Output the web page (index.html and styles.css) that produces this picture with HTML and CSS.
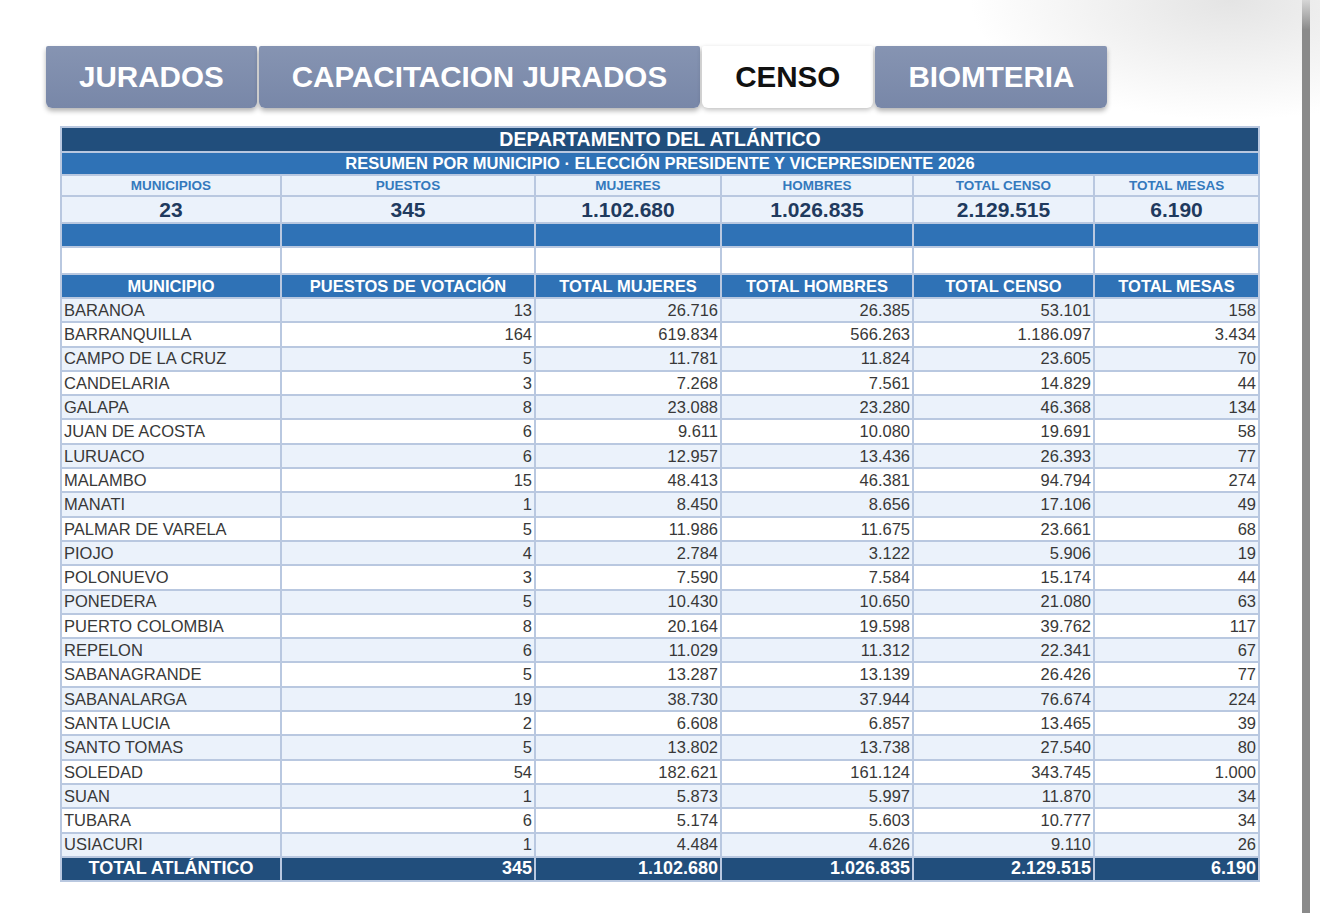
FILE: index.html
```html
<!DOCTYPE html>
<html lang="es">
<head>
    <meta charset="UTF-8">
    <meta name="viewport" content="width=device-width, initial-scale=1.0">
    <title>Censo - Atlántico</title>
    <link rel="stylesheet" href="styles.css">
</head>
<body>
    <div class="page">
        <!-- Tabs -->
        <nav class="tabs">
            <a class="tabs__item">JURADOS</a>
            <a class="tabs__item">CAPACITACION JURADOS</a>
            <a class="tabs__item tabs__item--active">CENSO</a>
            <a class="tabs__item">BIOMTERIA</a>
        </nav>

        <!-- Census table -->
        <table class="censo">
            <colgroup>
                <col style="width:220px">
                <col style="width:254px">
                <col style="width:186px">
                <col style="width:192px">
                <col style="width:181px">
                <col style="width:165px">
            </colgroup>
            <tr class="censo__title"><td colspan="6">DEPARTAMENTO DEL ATLÁNTICO</td></tr>
            <tr class="censo__subtitle"><td colspan="6">RESUMEN POR MUNICIPIO · ELECCIÓN PRESIDENTE Y VICEPRESIDENTE 2026</td></tr>
            <tr class="censo__labels">
                <td>MUNICIPIOS</td><td>PUESTOS</td><td>MUJERES</td><td>HOMBRES</td><td>TOTAL CENSO</td><td>TOTAL MESAS</td>
            </tr>
            <tr class="censo__values">
                <td>23</td><td>345</td><td>1.102.680</td><td>1.026.835</td><td>2.129.515</td><td>6.190</td>
            </tr>
            <tr class="censo__band"><td></td><td></td><td></td><td></td><td></td><td></td></tr>
            <tr class="censo__blank"><td></td><td></td><td></td><td></td><td></td><td></td></tr>
            <tr class="censo__head">
                <td>MUNICIPIO</td><td>PUESTOS DE VOTACIÓN</td><td>TOTAL MUJERES</td><td>TOTAL HOMBRES</td><td>TOTAL CENSO</td><td>TOTAL MESAS</td>
            </tr>
            <tbody id="rows"></tbody>
            <tr class="censo__total">
                <td>TOTAL ATLÁNTICO</td><td>345</td><td>1.102.680</td><td>1.026.835</td><td>2.129.515</td><td>6.190</td>
            </tr>
        </table>
    </div>
    <div class="edge"></div>

    <script>
        const data = [
            ['BARANOA', '13', '26.716', '26.385', '53.101', '158'],
            ['BARRANQUILLA', '164', '619.834', '566.263', '1.186.097', '3.434'],
            ['CAMPO DE LA CRUZ', '5', '11.781', '11.824', '23.605', '70'],
            ['CANDELARIA', '3', '7.268', '7.561', '14.829', '44'],
            ['GALAPA', '8', '23.088', '23.280', '46.368', '134'],
            ['JUAN DE ACOSTA', '6', '9.611', '10.080', '19.691', '58'],
            ['LURUACO', '6', '12.957', '13.436', '26.393', '77'],
            ['MALAMBO', '15', '48.413', '46.381', '94.794', '274'],
            ['MANATI', '1', '8.450', '8.656', '17.106', '49'],
            ['PALMAR DE VARELA', '5', '11.986', '11.675', '23.661', '68'],
            ['PIOJO', '4', '2.784', '3.122', '5.906', '19'],
            ['POLONUEVO', '3', '7.590', '7.584', '15.174', '44'],
            ['PONEDERA', '5', '10.430', '10.650', '21.080', '63'],
            ['PUERTO COLOMBIA', '8', '20.164', '19.598', '39.762', '117'],
            ['REPELON', '6', '11.029', '11.312', '22.341', '67'],
            ['SABANAGRANDE', '5', '13.287', '13.139', '26.426', '77'],
            ['SABANALARGA', '19', '38.730', '37.944', '76.674', '224'],
            ['SANTA LUCIA', '2', '6.608', '6.857', '13.465', '39'],
            ['SANTO TOMAS', '5', '13.802', '13.738', '27.540', '80'],
            ['SOLEDAD', '54', '182.621', '161.124', '343.745', '1.000'],
            ['SUAN', '1', '5.873', '5.997', '11.870', '34'],
            ['TUBARA', '6', '5.174', '5.603', '10.777', '34'],
            ['USIACURI', '1', '4.484', '4.626', '9.110', '26']
        ];

        const rows = document.getElementById('rows');
        data.forEach(row => {
            const tr = document.createElement('tr');
            tr.className = 'censo__row';
            tr.innerHTML = row.map(cell => `<td>${cell}</td>`).join('');
            rows.appendChild(tr);
        });
    </script>
</body>
</html>
```

FILE: styles.css
```css
html, body {
    height: 100%;
}

body {
    margin: 0;
    display: flex;
    font-family: 'Liberation Sans', Arial, sans-serif;
    background:
        radial-gradient(ellipse 260px 120px at 1230px 0, #e4e4e4, rgba(255, 255, 255, 0)),
        #ffffff;
}

.page {
    width: 1302px;
    padding: 46px 0 0 46px;
    box-sizing: border-box;
}

/* Right edge bar */
.edge {
    width: 8px;
    height: 100%;
    background: linear-gradient(#d6d6d6, #8a8a8a 30px, #8a8a8a);
}

/* Tabs */
.tabs {
    display: flex;
    gap: 2px;
}

.tabs__item {
    height: 62px;
    padding: 0 33px;
    display: flex;
    align-items: center;
    font-size: 29.6px;
    font-weight: 700;
    color: #ffffff;
    background: linear-gradient(#8694b2, #7887a8);
    border-radius: 2px 2px 6px 6px;
    box-shadow: 0 3px 5px rgba(0, 0, 0, 0.3);
}

.tabs__item--active {
    color: #111111;
    background: #ffffff;
    box-shadow: 0 2px 5px rgba(0, 0, 0, 0.25);
}

/* Census table */
.censo {
    margin: 18px 0 0 14px;
    border-collapse: collapse;
    table-layout: fixed;
    width: 1198px;
}

.censo td {
    border: 2px solid #b9c8e0;
    padding: 0 2px;
    white-space: nowrap;
    overflow: hidden;
}

.censo__title td {
    height: 22px;
    background: #214e7c;
    color: #ffffff;
    font-size: 19.5px;
    font-weight: 700;
    text-align: center;
}

.censo__subtitle td {
    height: 21px;
    background: #2f72b6;
    color: #ffffff;
    font-size: 16.5px;
    font-weight: 700;
    text-align: center;
}

.censo__labels td {
    height: 19px;
    background: #ebf2fb;
    color: #3479bd;
    font-size: 13.5px;
    font-weight: 700;
    text-align: center;
}

.censo__values td {
    height: 25px;
    background: #ebf2fb;
    color: #1f3a5e;
    font-size: 21px;
    font-weight: 700;
    text-align: center;
}

.censo__band td {
    height: 22px;
    background: #2f72b6;
}

.censo__blank td {
    height: 25px;
    background: #ffffff;
}

.censo__head td {
    height: 22px;
    background: #2f72b6;
    color: #ffffff;
    font-size: 16.5px;
    font-weight: 700;
    text-align: center;
}

.censo__row td {
    height: 22.3px;
    color: #383838;
    font-size: 16.5px;
    text-align: right;
    line-height: 1;
}

.censo__row td:first-child {
    text-align: left;
}

.censo__row:nth-child(odd) td {
    background: #ebf2fb;
}

.censo__total td {
    height: 22px;
    background: #214e7c;
    color: #ffffff;
    font-size: 18px;
    font-weight: 700;
    text-align: right;
}

.censo__total td:first-child {
    text-align: center;
}
```
